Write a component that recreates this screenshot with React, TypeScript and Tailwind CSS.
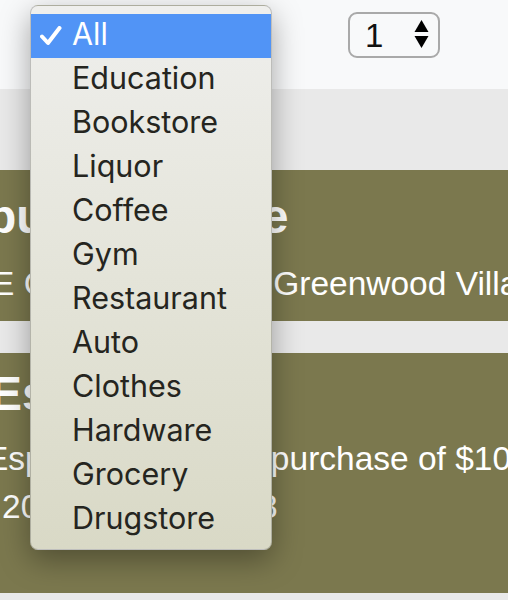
import React from "react";

const items = [
  "All",
  "Education",
  "Bookstore",
  "Liquor",
  "Coffee",
  "Gym",
  "Restaurant",
  "Auto",
  "Clothes",
  "Hardware",
  "Grocery",
  "Drugstore",
];

export default function App() {
  return (
    <div className="relative w-[508px] h-[600px] overflow-hidden bg-[#e9e9e9] font-['Liberation_Sans',Arial,sans-serif]">
      {/* top bar */}
      <div className="h-[89px] bg-[#f8f9fa] flex items-start pt-[12px]">
        <div className="ml-[30px] w-[242px] h-[45px] rounded-[8px] border-2 border-[#a9a9a9] bg-white" />
        <div className="ml-[76px] w-[92px] h-[46px] rounded-[9px] border-2 border-[#a9a9a9] bg-[#f8f9fa] flex items-center">
          <span className="pl-[15px] text-[33px] leading-none text-[#111]">1</span>
          <svg className="ml-[31px]" width="15" height="30" viewBox="0 0 15 30">
            <polygon points="7.5,0 14.5,12 0.5,12" fill="#000" />
            <polygon points="0.5,16 14.5,16 7.5,28" fill="#000" />
          </svg>
        </div>
      </div>

      {/* content */}
      <div className="pt-[81px]">
        <div className="h-[151px] bg-[#7b784e] text-white pt-[19px] overflow-hidden whitespace-nowrap">
          <div className="ml-[-13px] text-[48px] leading-[56px] font-bold">bucks Coffee</div>
          <div className="ml-[-8px] mt-[19px] text-[33.5px] leading-[40px]">E County Line Rd, Greenwood Village</div>
        </div>
        <div className="mt-[32px] h-[240px] bg-[#7b784e] text-white pt-[13px] overflow-hidden whitespace-nowrap">
          <div className="ml-[-10px] text-[48px] leading-[56px] font-bold">Espresso</div>
          <div className="ml-[-14px] mt-[17px] text-[33.5px] leading-[40px]">Espresso free with purchase of $10</div>
          <div className="ml-[2px] mt-[8px] text-[33.5px] leading-[40px]">2018-05-01 - 2018</div>
        </div>
      </div>

      {/* dropdown menu overlay */}
      <div className="absolute left-[30px] top-[5px] w-[242px] h-[545px] rounded-[8px] border border-black/20 bg-gradient-to-b from-[#efefed] via-[#e4e4d9] to-[#d9d9c6] shadow-[0_10px_30px_rgba(0,0,0,0.35)] pt-[8px] font-['Inter',sans-serif]">
        {items.map((it, i) => (
          <div
            key={it}
            className={
              i === 0
                ? "h-[44px] flex items-center bg-[#5194f6] text-white"
                : "h-[44px] flex items-center text-[#252520]"
            }
          >
            <div className="w-[41px] h-full flex items-center pl-[9px]">
              {i === 0 && (
                <svg width="22" height="20" viewBox="0 0 22 20">
                  <polyline
                    points="2,10.5 8,17 19.5,2"
                    fill="none"
                    stroke="#fff"
                    strokeWidth="4"
                    strokeLinecap="round"
                    strokeLinejoin="round"
                  />
                </svg>
              )}
            </div>
            <span className="mb-[4px] text-[30.5px] leading-none">{it}</span>
          </div>
        ))}
      </div>
    </div>
  );
}
